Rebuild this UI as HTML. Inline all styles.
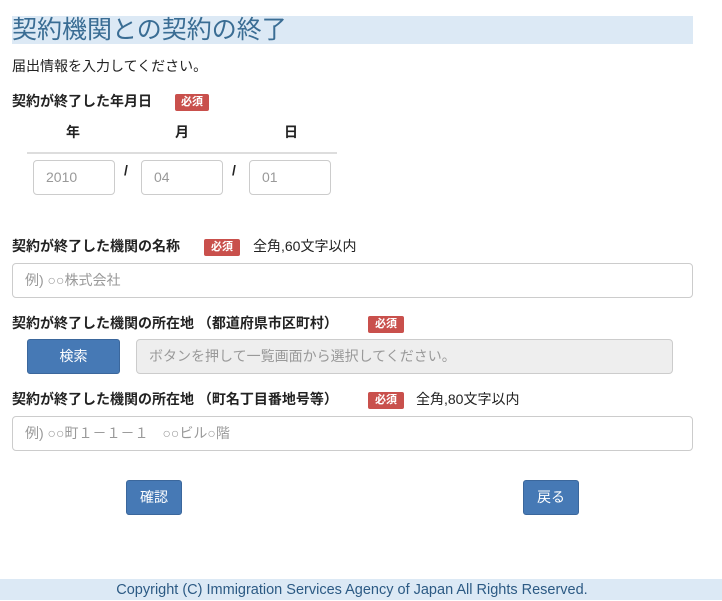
<!DOCTYPE html>
<html><head><meta charset="utf-8"><style>
body{margin:0;width:722px;height:600px;position:relative;background:#fff;font-family:"Liberation Sans","Noto Sans CJK JP",sans-serif;color:#222;overflow:hidden}
.a{position:absolute;white-space:nowrap}
.title{left:12px;top:16px;width:681px;height:28px;background:#dce9f5;color:#3a6d94;font-size:25px;line-height:28px}
.lbl{font-size:14px;font-weight:bold;line-height:16px}
.badge{background:#c9504c;color:#fff;font-size:11px;font-weight:bold;text-align:center;border-radius:2px;height:17px;line-height:17px}
.inp{border:1px solid #ccc;border-radius:4px;box-sizing:border-box;color:#999;font-size:14px;padding-left:12px;background:#fff}
.btn{background:#4679b5;border:1px solid #3b679c;border-radius:3px;color:#fff;font-size:14px;text-align:center;box-sizing:border-box}
</style></head><body>
<div class="a title">契約機関との契約の終了</div>
<div class="a" style="left:12px;top:58px;font-size:14px;line-height:16px">届出情報を入力してください。</div>
<div class="a lbl" style="left:12px;top:93px">契約が終了した年月日</div>
<div class="a badge" style="left:175px;top:94px;width:34px">必須</div>
<div class="a lbl" style="left:66px;top:124px">年</div>
<div class="a lbl" style="left:175px;top:124px">月</div>
<div class="a lbl" style="left:284px;top:124px">日</div>
<div class="a" style="left:27px;top:152px;width:310px;height:2px;background:#ddd"></div>
<div class="a inp" style="left:33px;top:160px;width:82px;height:35px;line-height:33px">2010</div>
<div class="a inp" style="left:141px;top:160px;width:82px;height:35px;line-height:33px">04</div>
<div class="a inp" style="left:249px;top:160px;width:82px;height:35px;line-height:33px">01</div>
<div class="a lbl" style="left:124px;top:162px">/</div>
<div class="a lbl" style="left:232px;top:162px">/</div>
<div class="a lbl" style="left:12px;top:238px">契約が終了した機関の名称</div>
<div class="a badge" style="left:204px;top:239px;width:36px">必須</div>
<div class="a" style="left:253px;top:238px;font-size:14px;line-height:16px">全角,60文字以内</div>
<div class="a inp" style="left:12px;top:263px;width:681px;height:35px;line-height:33px">例) ○○株式会社</div>
<div class="a lbl" style="left:12px;top:315px">契約が終了した機関の所在地 （都道府県市区町村）</div>
<div class="a badge" style="left:368px;top:316px;width:36px">必須</div>
<div class="a btn" style="left:27px;top:339px;width:93px;height:35px;line-height:33px">検索</div>
<div class="a inp" style="left:136px;top:339px;width:537px;height:35px;line-height:33px;background:#eee">ボタンを押して一覧画面から選択してください。</div>
<div class="a lbl" style="left:12px;top:391px">契約が終了した機関の所在地 （町名丁目番地号等）</div>
<div class="a badge" style="left:368px;top:392px;width:36px">必須</div>
<div class="a" style="left:416px;top:391px;font-size:14px;line-height:16px">全角,80文字以内</div>
<div class="a inp" style="left:12px;top:416px;width:681px;height:35px;line-height:33px">例) ○○町１－１－１　○○ビル○階</div>
<div class="a btn" style="left:126px;top:480px;width:56px;height:35px;line-height:33px">確認</div>
<div class="a btn" style="left:523px;top:480px;width:56px;height:35px;line-height:33px">戻る</div>
<div class="a" style="left:0;top:579px;width:722px;height:21px;background:#dce9f5"></div>
<div class="a" style="left:0;top:579px;width:704px;height:21px;color:#2c5a84;font-size:14.5px;line-height:22px;text-align:center">Copyright (C) Immigration Services Agency of Japan All Rights Reserved.</div>
</body></html>
